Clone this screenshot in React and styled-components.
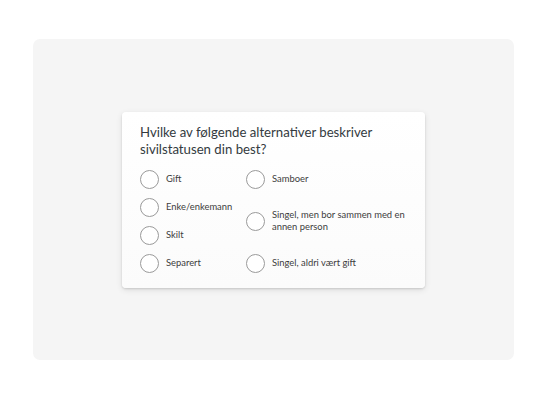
import React from "react";
import styled, { createGlobalStyle } from "styled-components";

const GlobalStyle = createGlobalStyle`
  html, body {
    margin: 0;
    padding: 0;
    background: #ffffff;
  }
  body {
    font-family: "Lato", "Open Sans", sans-serif;
  }
`;

const Page = styled.div`
  width: 547px;
  height: 400px;
  box-sizing: border-box;
  padding: 39px 33px 40px 33px;
`;

const Panel = styled.div`
  height: 100%;
  background: #f5f5f5;
  border-radius: 7px;
  display: flex;
  align-items: center;
  justify-content: center;
`;

const Card = styled.div`
  width: 303px;
  box-sizing: border-box;
  padding: 12px 18px 15px 18px;
  background: linear-gradient(180deg, #ffffff 0%, #fbfbfb 100%);
  border-radius: 4px;
  box-shadow: 0 1px 2px rgba(0, 0, 0, 0.12), 0 2px 6px rgba(0, 0, 0, 0.1);
`;

const Title = styled.h2`
  margin: 0 0 12px 0;
  font-size: 13.2px;
  line-height: 17px;
  font-weight: 400;
  color: #333a40;
`;

const Options = styled.div`
  display: grid;
  grid-template-columns: 106px 1fr;
`;

const Column = styled.div`
  display: flex;
  flex-direction: column;
  justify-content: space-between;
  gap: 9px;
`;

const Option = styled.label`
  display: flex;
  align-items: center;
  gap: 7px;
  cursor: pointer;
`;

const Circle = styled.span`
  flex: none;
  width: 19px;
  height: 19px;
  box-sizing: border-box;
  border: 1px solid #9a9a9a;
  border-radius: 50%;
  background: #fff;
`;

const Label = styled.span`
  font-size: 9.4px;
  line-height: 12px;
  color: #3d3d3d;
`;

const left = ["Gift", "Enke/enkemann", "Skilt", "Separert"];
const right = [
  "Samboer",
  "Singel, men bor sammen med en annen person",
  "Singel, aldri vært gift",
];

const App = () => {
  return (
    <>
      <GlobalStyle />
      <Page>
        <Panel>
          <Card>
            <Title>
              Hvilke av følgende alternativer beskriver
              <br />
              sivilstatusen din best?
            </Title>
            <Options>
              <Column>
                {left.map((t) => (
                  <Option key={t}>
                    <Circle />
                    <Label>{t}</Label>
                  </Option>
                ))}
              </Column>
              <Column>
                {right.map((t) => (
                  <Option key={t}>
                    <Circle />
                    <Label>{t}</Label>
                  </Option>
                ))}
              </Column>
            </Options>
          </Card>
        </Panel>
      </Page>
    </>
  );
};

export default App;
